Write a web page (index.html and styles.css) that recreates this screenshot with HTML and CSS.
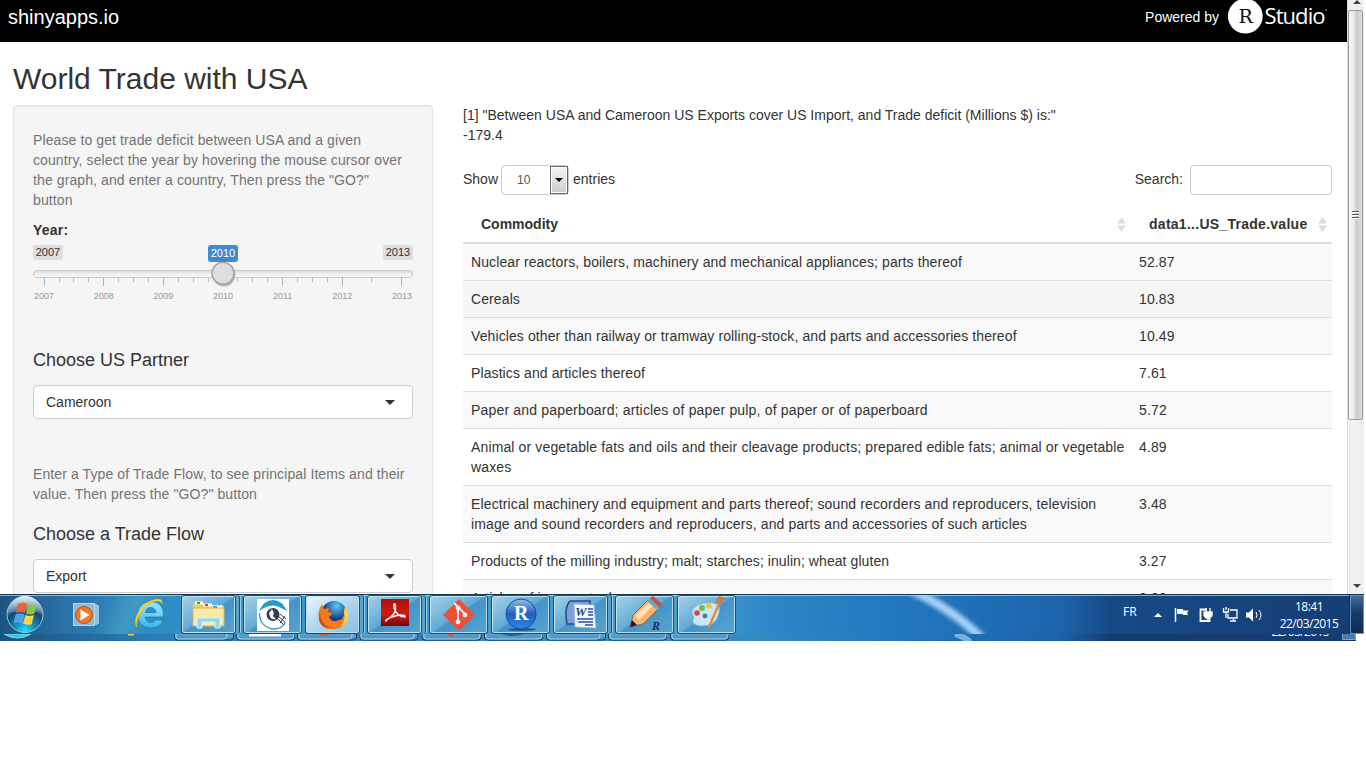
FILE: index.html
```html
<!DOCTYPE html>
<html lang="en">
<head>
<meta charset="utf-8">
<title>World Trade with USA</title>
<link rel="stylesheet" href="styles.css">
</head>
<body>
<div class="desktop">
  <div class="browser">
    <div class="page">
      <header class="topbar">
        <span class="brand">shinyapps.io</span>
        <div class="powered"><span>Powered by</span>
          <svg class="logo" width="100" height="42" viewBox="0 0 100 42"><circle cx="17.3" cy="16.2" r="17.4" fill="#fff"/><text class="logo-r" x="10.4" y="22.8">R</text><text class="logo-word" x="36.500" y="24" textLength="61">Studio</text><circle cx="98" cy="10" r=".8" fill="#aaa"/></svg>
        </div>
      </header>
      <h1>World Trade with USA</h1>
      <div class="columns">
        <aside class="well">
          <p class="help intro">Please to get trade deficit between USA and a given country, select the year by hovering the mouse cursor over the graph, and enter a country, Then press the "GO?" button</p>
          <label class="year">Year:</label>
          <div class="slider">
            <div class="tags"><span>2007</span><span class="current">2010</span><span>2013</span></div>
            <svg width="380" height="34" viewBox="33 262 380 34">
              <defs><linearGradient id="track" x2="0" y2="1"><stop stop-color="#ddd"/><stop offset="1" stop-color="#fff"/></linearGradient></defs>
              <rect x="33.5" y="270.5" width="379" height="7" rx="3.5" fill="url(#track)" stroke="#c8c8c8"/>
              <path d="M44.5 278v8M103.500 278v8M163.500 278v8M223 278v8M282.500 278v8M342.500 278v8M401.500 278v8" stroke="#9ab8d0"/>
              <path d="M59.500 278v4M73.500 278v4M88.500 278v4M118.500 278v4M133.500 278v4M148.500 278v4M178.500 278v4M193.500 278v4M208.500 278v4M237.500 278v4M252.500 278v4M267.500 278v4M297.500 278v4M312.500 278v4M327.500 278v4M371.500 278v4" stroke="#bbb"/>
              <circle cx="224" cy="275" r="11.500" fill="#bbb"/><circle cx="223" cy="273.300" r="11" fill="#dedede" stroke="#a4a4a4" stroke-width="1.400"/>
            </svg>
            <div class="ticks"><span>2007</span><span>2008</span><span>2009</span><span>2010</span><span>2011</span><span>2012</span><span>2013</span></div>
          </div>
          <h4 class="partner">Choose US Partner</h4>
          <div class="select"><span>Cameroon</span><i class="caret"></i></div>
          <p class="help flow">Enter a Type of Trade Flow, to see principal Items and their value. Then press the "GO?" button</p>
          <h4>Choose a Trade Flow</h4>
          <div class="select"><span>Export</span><i class="caret"></i></div>
        </aside>
        <main>
          <p class="result">[1] "Between USA and Cameroon US Exports cover US Import, and Trade deficit (Millions $) is:"<br>-179.4</p>
          <div class="controls">
            <div class="control"><span>Show</span> <div class="length"><span>10</span><b><i class="caret"></i></b></div> <span>entries</span></div>
            <div class="control"><span>Search:</span> <div class="search"></div></div>
          </div>
          <div class="row head"><div>Commodity <svg width="9" height="15"><path d="M4.500 0 9 6.500H0zM4.500 15 9 8.500H0z"/></svg></div><div class="value-head">data1...US_Trade.value <svg width="9" height="15"><path d="M4.500 0 9 6.500H0zM4.500 15 9 8.500H0z"/></svg></div></div>
          <div class="row first odd"><div>Nuclear reactors, boilers, machinery and mechanical appliances; parts thereof</div><div>52.87</div></div>
          <div class="row hovered"><div>Cereals</div><div>10.83</div></div>
          <div class="row odd"><div>Vehicles other than railway or tramway rolling-stock, and parts and accessories thereof</div><div>10.49</div></div>
          <div class="row"><div>Plastics and articles thereof</div><div>7.61</div></div>
          <div class="row odd wide"><div>Paper and paperboard; articles of paper pulp, of paper or of paperboard</div><div>5.72</div></div>
          <div class="row loose"><div>Animal or vegetable fats and oils and their cleavage products; prepared edible fats; animal or vegetable waxes</div><div>4.89</div></div>
          <div class="row odd loose"><div>Electrical machinery and equipment and parts thereof; sound recorders and reproducers, television image and sound recorders and reproducers, and parts and accessories of such articles</div><div>3.48</div></div>
          <div class="row tight"><div>Products of the milling industry; malt; starches; inulin; wheat gluten</div><div>3.27</div></div>
          <div class="row odd"><div>Articles of iron or steel</div><div>2.88</div></div>
        </main>
      </div>
    </div>
    <div class="scrollbar">
      <svg width="17" height="10"><path d="M5 4h8L9 0z" fill="#444"/></svg>
      <div class="thumb"><svg width="7" height="9"><path d="M0 .5h7M0 3.500h7M0 6.500h7" stroke="#555"/><path d="M0 1.500h7M0 4.500h7M0 7.500h7" stroke="#fff"/></svg></div>
      <svg class="down" width="17" height="14"><path d="M5 4h8L9 8z" fill="#444"/></svg>
    </div>
  </div>
  <div class="taskbar">
    <svg class="flare" width="200" height="40"><defs><filter id="soft"><feGaussianBlur stdDeviation="2"/></filter></defs><path d="M15-8Q65 15 94 46" fill="none" stroke="#a5d0f6" stroke-width="9" filter="url(#soft)"/></svg>
    <div class="apps">
      <svg class="plain orb" width="40" height="38" viewBox="5 595 40 38">
        <defs><radialGradient id="orb" cy=".95" r=".9"><stop stop-color="#21e6ff"/><stop offset=".3" stop-color="#168fc5"/><stop offset=".65" stop-color="#14456f"/><stop offset="1" stop-color="#a7c6dc"/></radialGradient><linearGradient id="glare" x2="0" y2="1"><stop stop-color="#eff7fb" stop-opacity=".85"/><stop offset="1" stop-color="#8cabc0" stop-opacity=".35"/></linearGradient></defs>
        <circle cx="25" cy="614.500" r="18" fill="url(#orb)" stroke="#8fcbe6"/><path d="M8 613a17 17 0 0 1 34 0q-17-4-34 0" fill="url(#glare)"/>
        <path d="M18 604q5-3 9 0l-2 9q-5-2-9 0z" fill="#ed6133"/><path d="M28 605q4 2 9-.5l-2.500 9q-4 2-8.500 0z" fill="#8bc43d"/><path d="M15.500 614.500q4-2 9 0l-2 9q-5-2-9 0z" fill="#48a5ea"/><path d="M25.500 615q4 2 8.500 0l-2.500 9.500q-4 1-8.500-1z" fill="#ffd63b"/>
      </svg>
      <svg class="plain player" width="28" height="26" viewBox="0 0 28 26"><rect x=".5" y="1.500" width="21" height="22" fill="#8fbbd7" stroke="#b9d7e8"/><path d="M23 2v21M25 3v19" stroke="#d0e7f4" stroke-width="1.300"/><circle cx="11" cy="13" r="8.500" fill="#f27623" stroke="#b94e16"/><path d="M7.500 7.500v11l9-5.500z" fill="#fff"/></svg>
      <svg class="plain ie" width="34" height="34" viewBox="133 597 34 34"><defs><linearGradient id="eblue" x2="0" y2="1"><stop stop-color="#9be9ff"/><stop offset="1" stop-color="#3cb4eb"/></linearGradient></defs><path fill-rule="evenodd" d="M163.500 617q1-15-12.500-15.500-13 .500-13.500 13.500 1 12.500 13.500 13 9 0 12-8h-8q-1.500 3-5 2.500-4-.5-5-5.500zm-18-4.500q1-5 5-5 4.500 0 5.500 5z" fill="url(#eblue)" stroke="#217cb8" stroke-width=".8"/><path d="M137 627c-6-5 4-27 21-28q5 0 4 5-1-3-4-3c-12 0-23 17-21 26" fill="#ffda37" stroke="#d2a51f" stroke-width=".7"/></svg>
      <div class="app stack explorer"><svg width="33" height="30" viewBox="0 0 33 30"><path d="M1 4q0-2 2-2h7l2 3h18q2 0 2 2v18H1z" fill="#eec765"/><path d="M3 3h8M11 5h9M20 7h10" stroke="#fff" stroke-width="3"/><path d="M5 3h3" stroke="#29a52d" stroke-width="2"/><path d="M13 5h3" stroke="#df3a24" stroke-width="2"/><path d="M21 7h4" stroke="#3b97d3" stroke-width="2"/><path d="M1 8h31v18H1z" fill="#fce9a3" stroke="#ddb45d"/><path d="M5 28V18h23v10h-5v-6H10v6z" fill="#91d8ef" stroke="#d2f4ff"/></svg></div>
      <div class="app globe"><svg width="32" height="32" viewBox="0 0 32 32"><path d="M0 0h32v32H0z" fill="#fff"/><path d="M2 12Q7 1 16 1t14 11l-6-3q-8-5-17 0z" fill="#279bc9"/><path d="M2.500 14q0 14 14 16 9 0 12-7" fill="none" stroke="#3a9ac4" stroke-width="1.300"/><circle cx="16" cy="15.500" r="6.500" fill="#343a50"/><path d="M15 10l2 4-1 3 3 3q-5 1-6-2l-1-4z" fill="#eee"/><path d="M21 17l7 6M23 15l6 5M20 19l7 7M23 24l5-7" stroke="#333a4d"/></svg></div>
      <div class="app stack active"><svg width="32" height="32" viewBox="0 0 32 32"><defs><radialGradient id="sea" cx=".6" cy=".2"><stop stop-color="#58cdf5"/><stop offset="1" stop-color="#173c83"/></radialGradient></defs><circle cx="17" cy="15" r="13" fill="url(#sea)"/><path d="M28 7q8 17-6 22Q5 34 2 20 0 13 5 5l2 5 5-1-1 4 5 1-4 4q2 5 7 4 4-1 6-2-2 5-7 5 10-3 10-18z" fill="#f47a20"/><path d="M28 7q8 14-4 21 5-8 3-15z" fill="#ffd347"/><path d="M3 13q0 13 12 16Q1 29 2 17z" fill="#c64b17"/></svg></div>
      <div class="app stack pdf"><svg width="28" height="27" viewBox="0 0 28 27"><defs><linearGradient id="pdf" x2="0" y2="1"><stop stop-color="#a9120e"/><stop offset=".55" stop-color="#d31912"/><stop offset="1" stop-color="#770806"/></linearGradient></defs><path d="M0 0h28v27H0z" fill="url(#pdf)"/><path d="M5 21q12-6 9-16-2-1-1 4 3 9 11 9 1-2-5-2-8 1-14 5-1 2 1 0" fill="none" stroke="#fff" stroke-width="1.400"/></svg></div>
      <div class="app"><svg width="34" height="34" viewBox="0 0 34 34"><path d="M17 1 33 17 17 33 1 17z" fill="#ed5034"/><path d="m12 5 4 4v15m0-15 8 8" fill="none" stroke="#dcebf4" stroke-width="2"/><circle cx="16" cy="10" r="2.400" fill="#dcebf4"/><circle cx="16" cy="24" r="2.400" fill="#dcebf4"/><circle cx="23" cy="17" r="2.400" fill="#dcebf4"/></svg></div>
      <div class="app"><svg width="34" height="34" viewBox="0 0 34 34"><defs><linearGradient id="ball" x2="0" y2="1"><stop stop-color="#8fc0ef"/><stop offset=".5" stop-color="#2460bb"/><stop offset="1" stop-color="#2b89ee"/></linearGradient></defs><ellipse cx="18" cy="31.500" rx="14" ry="1.500" fill="#235886"/><circle cx="17" cy="16" r="15" fill="url(#ball)" stroke="#164c9f"/><text class="r-icon" x="10" y="22">R</text></svg></div>
      <div class="app stack"><svg width="32" height="30" viewBox="0 0 32 30"><path d="M5 1h20v23H2Q-1 7 5 1" fill="#7ba0d8" stroke="#234a93" stroke-width="1.500"/><path d="m9 4 20 1 2 23-21-1z" fill="#f3f7ff" stroke="#a1b9dd"/><text class="w-icon" x="10" y="16">W</text><path d="M23 9h5M23 12h5M23 15h5M12 19h16M13 22h15M20 25h8" stroke="#28509c" stroke-width="1.500"/></svg></div>
      <div class="app pencil"><svg width="34" height="34" viewBox="0 0 34 34"><path d="M2 29 5 17 20 2l10 9-15 15z" fill="#f3b66f" stroke="#9d6433"/><path d="m7 18 15-14 4 3-15 15z" fill="#ffe0af"/><path d="m19 3 3-3 10 9-2 4z" fill="#5cadd0"/><path d="m22 0 3-2 9 8-2 4z" fill="#cf4d36"/><path d="m2 29 2-7 5 5z" fill="#16164f"/><text class="r-small" x="24" y="32">R</text></svg></div>
      <div class="app paint"><svg width="34" height="34" viewBox="0 0 34 34"><path d="M14 5q18-3 15 10-3 14-18 13-10-1-8-6 2-3-1-6Q1 8 14 5" fill="#c9e7f7" stroke="#79b4d6"/><circle cx="7" cy="15" r="2.800" fill="#df4739"/><circle cx="12" cy="10" r="2.900" fill="#73bc4d"/><circle cx="19" cy="8" r="2.800" fill="#f0c72d"/><circle cx="15" cy="18" r="2.400" fill="#3c80ae"/><path d="m30 6-9 22-3 3 1-5 9-21z" fill="#e28b3b"/><path d="m25 4 4-6 7 2-5 7z" fill="#b78358"/></svg></div>
    </div>
    <div class="tray">
      <span class="lang">FR</span>
      <svg width="101" height="24" viewBox="1154 603 101 24"><path d="M1154 617h8l-4-4z" fill="#fff"/><path d="M1175.500 608v14" stroke="#fff" stroke-width="1.500"/><path d="M1177 609h6v1.500h6l-2 2 1 2.500h-5v-1h-6z" fill="#fff"/><g fill="none" stroke="#fff" stroke-width="1.300"><path d="M1207 609.500h-6.500v11.500h9v-2" stroke-width="1.800"/><path d="M1204 612h8v3.500l-2 2.500h-4l-2-2.500z" fill="#fff"/><path d="M1206 612v-4M1210 612v-4M1208 618v2"/><path d="M1230 610h7v8h-9v-4M1230 621h6M1233.500 618v3"/><path d="M1223.500 608v4h5v-4M1226 612v6M1226 607v3"/></g><path d="M1246 612.500h3l4-4v13l-4-4h-3z" fill="#fff"/></svg>
      <svg class="sound" width="7" height="16"><path d="M1 5q2 3 0 6M4 3q4 5 0 10" fill="none" stroke="#fff"/></svg>
      <div class="clock">18:41<br>22/03/2015</div>
      <div class="show-desktop"></div>
    </div>
  </div>
  <svg class="echo" width="1356" height="7" viewBox="0 634 1356 7">
    <defs><linearGradient id="button" x2="0" y2="1"><stop stop-color="#5da7d4"/><stop offset="1" stop-color="#478fc1"/></linearGradient></defs>
    <path d="M4 634q13 8 27 0z" fill="#20cce9" stroke="#9ad1e6"/><path d="M128 634.500h6" stroke="#e0cf41" stroke-width="2"/>
    <g fill="url(#button)" stroke="#173d5d"><path d="M174.500 632v5q0 3 3 3h53q3 0 3-3v-5"/><path d="M236.500 632v5q0 3 3 3h52q3 0 3-3v-5M297.500 632v5q0 3 3 3h53q3 0 3-3v-5M360 632v5q0 3 3 3h52q3 0 3-3v-5M422 632v5q0 3 3 3h53q3 0 3-3v-5M484.500 632v5q0 3 3 3h52q3 0 3-3v-5M546.500 632v5q0 3 3 3h53q3 0 3-3v-5M608.500 632v5q0 3 3 3h52q3 0 3-3v-5M670.500 632v5q0 3 3 3h52q3 0 3-3v-5"/></g>
    <path d="M176 634v3q0 2 2 2h45q4 0 4-3v-2M238 634v3q0 2 2 2h50q4 0 4-3v-2M299 634v3q0 2 2 2h47q4 0 4-3v-2M361 634v3q0 2 2 2h47q4 0 4-3v-2M424 634v3q0 2 2 2h50q4 0 4-3v-2M486 634v3q0 2 2 2h50q4 0 4-3v-2M548 634v3q0 2 2 2h46q4 0 4-3v-2M610 634v3q0 2 2 2h50q4 0 4-3v-2M672 634v3q0 2 2 2h50q4 0 4-3v-2" fill="none" stroke="#b5daed"/>
    <path d="M249 634h32v2.500h-32z" fill="#fff"/><path d="M318 634q6 4 12 0z" fill="#ba693a"/><path d="M447 634h7l-3 3z" fill="#ed5034"/><path d="M501 634q11 4 23 0z" fill="#24619b"/><path d="M697 634l2 3 1-3z" fill="#d28747"/><path d="M955 634q10 3 15 8" fill="none" stroke="#9bcaf2" stroke-width="6" opacity=".7"/>
    <text class="echo-date" x="1271.500" y="635.500" textLength="58">22/03/2015</text><path d="M1342.500 633v6.500h13V633" fill="#4c7ba4" stroke="#7da8ca"/>
  </svg>
</div>
</body>
</html>
```
FILE: styles.css
```css
* { box-sizing: border-box; }
body { margin: 0; background: #fff; color: #333; font: 14px/20px "Liberation Sans", Arial, sans-serif; }
.desktop { height: 768px; overflow: hidden; }
.browser { display: flex; width: 1364px; height: 594px; overflow: hidden; }
.page { width: 1347px; height: 594px; overflow: hidden; }
.topbar { display: flex; justify-content: space-between; height: 42px; padding: 0 19px 0 8px; background: #000; color: #fff; }
.brand { font-size: 20px; line-height: 34px; }
.powered { display: flex; gap: 9px; line-height: 34px; }
.logo-r { font: 19px "DejaVu Serif", serif; fill: #111; }
.logo-word { font: 22px "Open Sans", sans-serif; fill: #fff; }
h1 { margin: 20px 0 10px 13px; font-size: 30px; font-weight: 400; line-height: 33px; }
.columns { display: grid; grid-template-columns: 420px 869px; gap: 30px; margin-left: 13px; }
.well { height: 560px; padding: 24px 19px; border: 1px solid #e3e3e3; border-radius: 4px; background: #f5f5f5; box-shadow: inset 0 1px 1px rgba(0,0,0,.05); }
.help { margin: 0; color: #737373; letter-spacing: .1px; }
.intro { padding-right: 5px; }
.year { display: block; height: 20px; margin-top: 10px; font-weight: 700; letter-spacing: .2px; }
.slider { height: 109px; padding-top: 5px; }
.slider > svg { display: block; }
.tags { display: flex; justify-content: space-between; height: 17px; font-size: 11px; line-height: 15px; }
.tags span { width: 30px; height: 15px; border-radius: 3px; background: #dedede; text-align: center; }
.tags .current { height: 17px; background: #428bca; color: #fff; line-height: 17px; }
.ticks { display: flex; justify-content: space-between; height: 10px; margin-top: -6px; color: #999; font-size: 9px; line-height: 12px; }
.ticks span { width: 22px; text-align: center; }
h4 { margin: 0; font-size: 18px; font-weight: 400; line-height: 20px; }
.partner { margin-top: 1px; }
.select { display: flex; align-items: center; justify-content: space-between; height: 34px; margin-top: 15px; padding: 0 17px 0 12px; border: 1px solid #ccc; border-radius: 4px; background: #fff; }
.caret { border: 5px solid transparent; border-top-color: #333; border-bottom: 0; }
.help.flow { margin: 45px 0 20px; }
.result { height: 40px; margin: 0; }
.controls { display: flex; justify-content: space-between; margin-top: 20px; }
.control { display: flex; align-items: center; gap: 5px; height: 30px; }
.control > span { padding-bottom: 2px; }
.control:first-child { gap: 4px; }
.length { display: flex; justify-content: space-between; width: 68px; height: 30px; margin-left: -1px; border: 1px solid #ccc; border-radius: 4px; color: #555; font-size: 12px; line-height: 28px; padding-left: 15px; }
.length b { display: flex; align-items: center; justify-content: center; width: 18px; border: 1px solid #666; background: linear-gradient(#f5f5f5, #ccc); box-shadow: inset 0 0 0 1px #fff; }
.length .caret { border-width: 4px 4px 0; border-top-color: #000; }
.search { width: 142px; height: 30px; margin-left: 2px; border: 1px solid #ccc; border-radius: 4px; }
.row { display: grid; grid-template-columns: 668px 201px; border-top: 1px solid #ddd; letter-spacing: .1px; }
.row > div { padding: 8px 6px 8px 8px; }
.row.wide { letter-spacing: .175px; }
.row.loose { letter-spacing: .132px; }
.row.tight { letter-spacing: .07px; }
.row.first { border-top: 0; }
.odd { background: #f9f9f9; }
.hovered { background: #f5f5f5; }
.row.head { height: 49px; padding-top: 11px; border-top: 0; border-bottom: 2px solid #ddd; font-weight: 700; letter-spacing: 0; }
.row.head > div { display: flex; justify-content: space-between; align-items: center; height: 36px; padding: 0 5px 0 18px; }
.row .value-head { letter-spacing: .27px; }
.head svg { fill: #ddd; }
.scrollbar { display: flex; flex-direction: column; width: 17px; border-left: 1px solid #ddd; background: #f0f0f0; }
.thumb { display: flex; align-items: center; justify-content: center; width: 15px; height: 410px; padding-right: 1px; border: 1px solid #999; border-radius: 2px; background: linear-gradient(90deg,#fafafa,#e5e5e8 45%,#c9c9cf 55%,#dedee2); }
.down { margin-top: auto; }
.taskbar { position: relative; display: flex; justify-content: space-between; width: 1364px; height: 40px; overflow: hidden; border-top: 1px solid #153751; background: linear-gradient(115deg,transparent 100px,rgba(110,205,205,.28) 125px,transparent 150px), linear-gradient(90deg,#1b5482,#286fa5 60px,#2e86bd 120px,#3297cf 240px,#479dd0 690px,#2d86c7 770px,#2178be 900px,#1d64ad 1060px,#164a86 1110px,#153e73); box-shadow: inset 0 1px rgba(205,231,244,.65); }
.flare { position: absolute; left: 890px; top: 0; }
.apps { display: flex; align-items: flex-start; height: 39px; }
.plain { flex: none; }
.orb { margin: 0 0 0 5px; }
.player { margin: 7px 0 0 28px; }
.ie { margin: 2px 13px 0 32px; }
.app { flex: none; display: flex; align-items: center; justify-content: center; width: 59px; height: 39px; margin-right: 3px; border: 1px solid #204c6c; border-radius: 3px; background: linear-gradient(145deg,#a8d1e8,#61acd7 48%,#4594c9 52%,#55a5d1); box-shadow: inset 0 0 0 1px rgba(211,237,249,.8); }
.app svg { overflow: visible; }
.app.pdf { padding-bottom: 4px; }
.app.stack { width: 55px; margin-right: 7px; box-shadow: inset 0 0 0 1px #c3e1ef, 3px 0 #5ba2cb, 4px 0 #204c6c, 5px 0 #9dcce3; }
.explorer { margin-left: 1px; }
.app.active { background: linear-gradient(145deg,#eef7fc,#b0d7ee 48%,#83bfdf); }
.tray { display: flex; align-items: flex-start; height: 39px; color: #fff; font: 12px/17px "Open Sans", sans-serif; }
.lang { width: 31px; padding-top: 8px; font-size: 12px; }
.tray > svg { margin-top: 8px; }
.tray .sound { margin-top: 12px; }
.clock { width: 72px; margin-left: 11px; padding-top: 3px; text-align: center; letter-spacing: -.5px; }
.show-desktop { width: 14px; height: 39px; margin-left: 5px; border: 1px solid #6594ba; background: linear-gradient(#416c98,#163c69 45%,#122b55); box-shadow: -1px 0 #102e51; }
.echo { display: block; background: linear-gradient(90deg,#1b5482,#2b84bd 180px,#338dc3 740px,#2178be 900px,#1c63aa 1060px,#143c70 1110px); }
.r-icon { font: 700 20px "Liberation Serif", serif; fill: #fff; }
.w-icon { font: italic 700 13px "Liberation Serif", serif; fill: #244b95; }
.r-small { font: italic 700 12px "Liberation Serif", serif; fill: #17295e; }
.echo-date { font: 12px "Open Sans", sans-serif; fill: #fff; }
```
